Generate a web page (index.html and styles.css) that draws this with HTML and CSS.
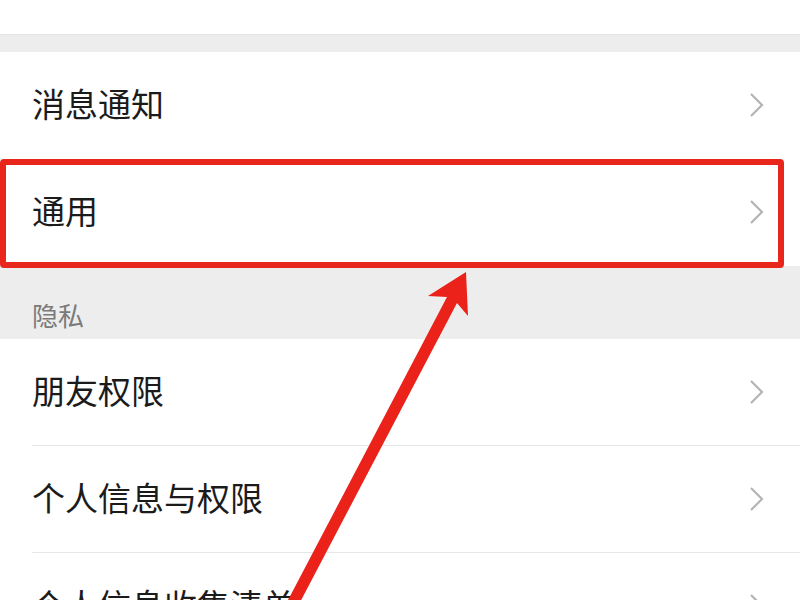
FILE: index.html
```html
<!DOCTYPE html>
<html lang="zh">
<head>
<meta charset="utf-8">
<link rel="stylesheet" href="styles.css">
</head>
<body>
<div class="page">
  <div class="group top-group">
    <div class="row partial">
      <span class="label faint">帐号与安全</span>
    </div>
  </div>
  <div class="gap"></div>
  <div class="group">
    <div class="row">
      <span class="label">消息通知</span>
      <svg class="chev" viewBox="0 0 16 26" width="16" height="26"><polyline points="2,2 13,13 2,24" /></svg>
    </div>
    <div class="row highlighted">
      <span class="label">通用</span>
      <svg class="chev" viewBox="0 0 16 26" width="16" height="26"><polyline points="2,2 13,13 2,24" /></svg>
      <div class="redbox"></div>
    </div>
  </div>
  <div class="section">隐私</div>
  <div class="group">
    <div class="row divided">
      <span class="label">朋友权限</span>
      <svg class="chev" viewBox="0 0 16 26" width="16" height="26"><polyline points="2,2 13,13 2,24" /></svg>
    </div>
    <div class="row divided">
      <span class="label">个人信息与权限</span>
      <svg class="chev" viewBox="0 0 16 26" width="16" height="26"><polyline points="2,2 13,13 2,24" /></svg>
    </div>
    <div class="row">
      <span class="label">个人信息收集清单</span>
      <svg class="chev" viewBox="0 0 16 26" width="16" height="26"><polyline points="2,2 13,13 2,24" /></svg>
    </div>
  </div>
  <svg class="arrow" viewBox="0 0 800 600" width="800" height="600">
    <polygon points="287,602 447,297 428,296 466,272 468,316 457,303 297,608" />
  </svg>
</div>
</body>
</html>
```
FILE: styles.css
```css
html, body {
  margin: 0;
  padding: 0;
  background: #ededed;
}
body {
  font-family: "Noto Sans CJK SC", "Noto Sans", sans-serif;
  width: 800px;
  height: 600px;
  overflow: hidden;
}
.page {
  position: relative;
  width: 800px;
  height: 600px;
  overflow: hidden;
}
.group {
  background: #ffffff;
}
.top-group {
  margin-top: -73px;
  border-bottom: 1px solid #e2e2e2;
}
.gap {
  height: 17px;
}
.row {
  position: relative;
  display: flex;
  align-items: center;
  justify-content: space-between;
  height: 107px;
  padding: 0 35px 0 32px;
  box-sizing: border-box;
}
.row.partial {
  padding-left: 8px;
}
.label {
  font-size: 33px;
  color: #1b1b1b;
  line-height: 40px;
  transform: translateY(-3px);
}
.label.faint {
  color: #cccccc;
  font-size: 26px;
  transform: translateY(-26px);
}
.row.divided::after {
  content: "";
  position: absolute;
  left: 32px;
  right: 0;
  bottom: 0;
  height: 1px;
  background: #e6e6e6;
}
.chev {
  fill: none;
  stroke: #b4b4b4;
  stroke-width: 2.2;
  transform: translateY(-1px);
}
.section {
  height: 73px;
  padding: 29px 0 0 32px;
  box-sizing: border-box;
  font-size: 26px;
  color: #7a7a7a;
  line-height: 40px;
}
.redbox {
  position: absolute;
  left: 0;
  right: 16px;
  top: 0;
  bottom: -2px;
  border: 6px solid #e8261c;
  border-radius: 4px;
  pointer-events: none;
}
.arrow {
  position: absolute;
  left: 0;
  top: 0;
  fill: #ea2219;
}
```
